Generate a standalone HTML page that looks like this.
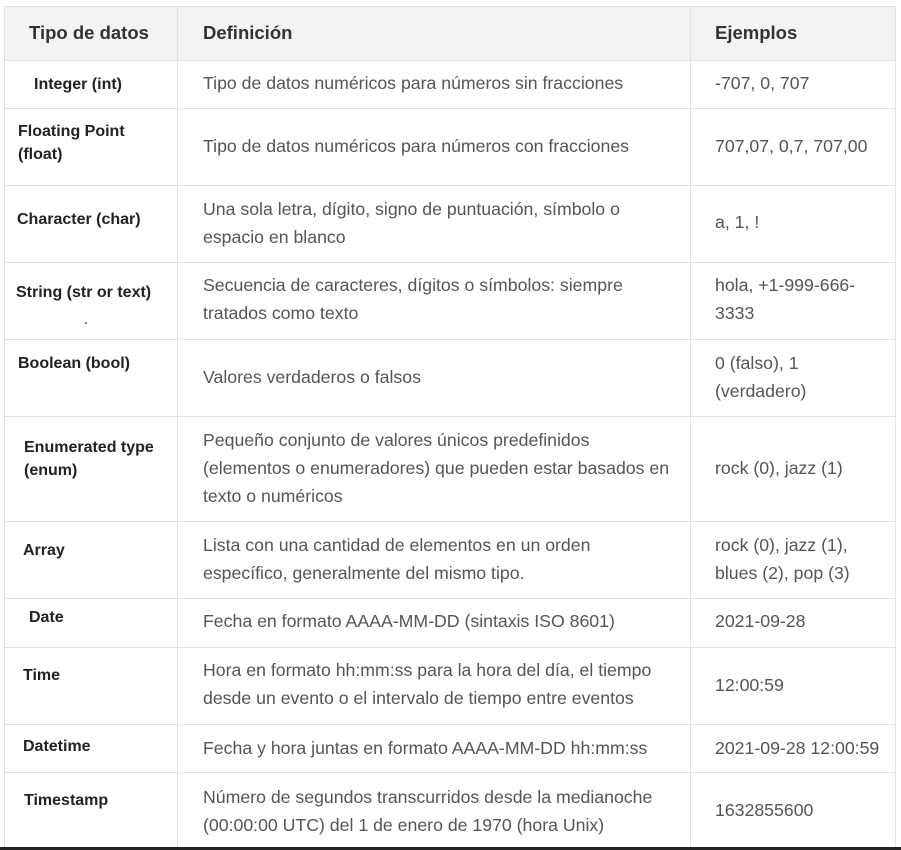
<!DOCTYPE html>
<html><head><meta charset="utf-8"><style>
body{margin:0;width:901px;height:850px;background:#fff;position:relative;overflow:hidden;font-family:"Liberation Sans",sans-serif;color:#555;}
.t{position:absolute;font-size:17.7px;line-height:28px;white-space:nowrap;}
.b{position:absolute;font-size:16px;font-weight:bold;color:#222;line-height:23px;white-space:nowrap;}
.h{position:absolute;font-size:18.5px;font-weight:bold;color:#333;line-height:28px;}
.hl{position:absolute;left:4px;width:891px;height:1px;background:#e2e2e2;}
.vl{position:absolute;top:6px;height:842px;width:1px;background:#e2e2e2;}
</style></head><body>
<div style="position:absolute;left:4px;top:6px;width:891px;height:54px;background:#f3f3f3"></div>
<div class="hl" style="top:6px"></div>
<div class="hl" style="top:60px"></div>
<div class="hl" style="top:108px"></div>
<div class="hl" style="top:185px"></div>
<div class="hl" style="top:262px"></div>
<div class="hl" style="top:339px"></div>
<div class="hl" style="top:416px"></div>
<div class="hl" style="top:521px"></div>
<div class="hl" style="top:598px"></div>
<div class="hl" style="top:647px"></div>
<div class="hl" style="top:724px"></div>
<div class="hl" style="top:772px"></div>
<div class="vl" style="left:4px"></div>
<div class="vl" style="left:177px"></div>
<div class="vl" style="left:690px"></div>
<div class="vl" style="left:895px"></div>
<div style="position:absolute;left:0;top:847px;width:901px;height:3px;background:#222"></div>

<div class="h" style="left:29px;top:19px">Tipo de datos</div>
<div class="h" style="left:203px;top:19px">Definición</div>
<div class="h" style="left:715px;top:19px">Ejemplos</div>

<div class="b" style="left:34px;top:73px">Integer (int)</div>
<div class="t" style="left:203px;top:69px">Tipo de datos numéricos para números sin fracciones</div>
<div class="t" style="left:715px;top:69px">-707, 0, 707</div>

<div class="b" style="left:18px;top:120px">Floating Point<br>(float)</div>
<div class="t" style="left:203px;top:132px">Tipo de datos numéricos para números con fracciones</div>
<div class="t" style="left:715px;top:132px">707,07, 0,7, 707,00</div>

<div class="b" style="left:17px;top:208px">Character (char)</div>
<div class="t" style="left:203px;top:195px">Una sola letra, dígito, signo de puntuación, símbolo o<br>espacio en blanco</div>
<div class="t" style="left:715px;top:208px">a, 1, !</div>

<div class="b" style="left:16px;top:281px">String (str or text)</div>
<div style="position:absolute;left:85px;top:322px;width:2px;height:2px;background:#888"></div>
<div class="t" style="left:203px;top:271px">Secuencia de caracteres, dígitos o símbolos: siempre<br>tratados como texto</div>
<div class="t" style="left:715px;top:271px">hola, +1-999-666-<br>3333</div>

<div class="b" style="left:18px;top:352px">Boolean (bool)</div>
<div class="t" style="left:203px;top:363px">Valores verdaderos o falsos</div>
<div class="t" style="left:715px;top:349px">0 (falso), 1<br>(verdadero)</div>

<div class="b" style="left:24px;top:436px">Enumerated type<br>(enum)</div>
<div class="t" style="left:203px;top:426px">Pequeño conjunto de valores únicos predefinidos<br>(elementos o enumeradores) que pueden estar basados en<br>texto o numéricos</div>
<div class="t" style="left:715px;top:454px">rock (0), jazz (1)</div>

<div class="b" style="left:23px;top:539px">Array</div>
<div class="t" style="left:203px;top:531px">Lista con una cantidad de elementos en un orden<br>específico, generalmente del mismo tipo.</div>
<div class="t" style="left:715px;top:531px">rock (0), jazz (1),<br>blues (2), pop (3)</div>

<div class="b" style="left:29px;top:606px">Date</div>
<div class="t" style="left:203px;top:607px">Fecha en formato AAAA-MM-DD (sintaxis ISO 8601)</div>
<div class="t" style="left:715px;top:607px">2021-09-28</div>

<div class="b" style="left:23px;top:664px">Time</div>
<div class="t" style="left:203px;top:656px">Hora en formato hh:mm:ss para la hora del día, el tiempo<br>desde un evento o el intervalo de tiempo entre eventos</div>
<div class="t" style="left:715px;top:671px">12:00:59</div>

<div class="b" style="left:23px;top:735px">Datetime</div>
<div class="t" style="left:203px;top:734px">Fecha y hora juntas en formato AAAA-MM-DD hh:mm:ss</div>
<div class="t" style="left:715px;top:734px">2021-09-28 12:00:59</div>

<div class="b" style="left:24px;top:789px">Timestamp</div>
<div class="t" style="left:203px;top:783px">Número de segundos transcurridos desde la medianoche<br>(00:00:00 UTC) del 1 de enero de 1970 (hora Unix)</div>
<div class="t" style="left:715px;top:796px">1632855600</div>
</body></html>
